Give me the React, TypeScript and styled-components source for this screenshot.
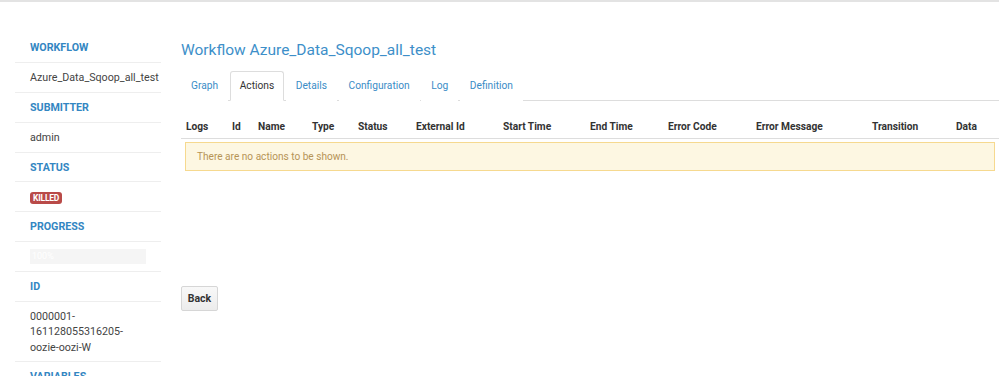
import React from "react";
import styled, { createGlobalStyle } from "styled-components";

const Global = createGlobalStyle`
  html, body { margin: 0; padding: 0; background: #fff; }
  body { font-family: Roboto, "Liberation Sans", Arial, sans-serif; font-size: 10px; color: #333; overflow: hidden; }
  * { box-sizing: border-box; }
`;

const TopBar = styled.div`
  height: 2px;
  background: #e3e3e3;
`;

const Page = styled.div`
  display: flex;
  gap: 20px;
  padding: 31px 0 0 15px;
`;

const Sidebar = styled.ul`
  list-style: none;
  margin: 0;
  padding: 0;
  width: 146px;
  flex: none;
`;

const SideItem = styled.li<{ $head?: boolean }>`
  padding: 7px 15px 6.4px;
  line-height: 15.5px;
  border-bottom: 1px solid #eeeeee;
  font-size: 10.7px;
  color: ${(p) => (p.$head ? "#3386c2" : "#444")};
  font-weight: ${(p) => (p.$head ? 700 : 400)};
  text-transform: ${(p) => (p.$head ? "uppercase" : "none")};
  white-space: nowrap;
`;

const WrapItem = styled(SideItem)`
  white-space: normal;
`;

const Badge = styled.span`
  display: inline-block;
  background: #b94a48;
  color: #fff;
  font-weight: 700;
  font-size: 8.5px;
  line-height: 12px;
  padding: 0 3px;
  border-radius: 3px;
  vertical-align: middle;
  letter-spacing: -0.2px;
`;

const Progress = styled.div`
  height: 15px;
  width: 116px;
  background: #f5f5f5;
  color: #fff;
  font-size: 9px;
  line-height: 15px;
  padding-left: 2px;
`;

const Main = styled.div`
  flex: 1;
  min-width: 818px;
  display: flex;
  flex-direction: column;
`;

const Title = styled.h2`
  margin: 6px 0 10px;
  font-size: 15.5px;
  font-weight: 400;
  line-height: 22px;
  color: #3d8fc9;
`;

const Tabs = styled.ul`
  list-style: none;
  margin: 0;
  padding: 0;
  display: flex;
  border-bottom: 1px solid #dddddd;
  height: 30px;
`;

const Tab = styled.li<{ $active?: boolean }>`
  margin-right: 1.6px;
  padding: 0 9px;
  height: 30px;
  line-height: 28px;
  font-size: 10.2px;
  color: ${(p) => (p.$active ? "#333" : "#3a8cc6")};
  border: 1px solid ${(p) => (p.$active ? "#dddddd" : "transparent")};
  border-bottom-color: ${(p) => (p.$active ? "#fff" : "transparent")};
  border-radius: 3px 3px 0 0;
  background: #fff;
`;

const Table = styled.table`
  width: 818px;
  border-collapse: collapse;
  table-layout: fixed;
  margin-top: 16px;
`;

const Th = styled.th<{ $w: number }>`
  width: ${(p) => p.$w}px;
  text-align: left;
  font-weight: 700;
  font-size: 10.2px;
  color: #333;
  padding: 4px 5px 5px;
  line-height: 12px;
  border-bottom: 1px solid #dddddd;
  white-space: nowrap;
`;

const Td = styled.td`
  padding: 3px 4px 0;
`;

const Alert = styled.div`
  background: #fdf7e2;
  border: 1px solid #f6d98f;
  color: #b69456;
  font-size: 10.1px;
  padding: 7px 11px;
  line-height: 13px;
`;

const Footer = styled.div`
  margin-top: 115px;
`;

const Button = styled.button`
  font-family: Roboto, "Liberation Sans", Arial, sans-serif;
  font-size: 10.5px;
  font-weight: 700;
  color: #333;
  background: linear-gradient(#f8f8f8, #ececec);
  border: 1px solid #d6d6d6;
  border-radius: 2px;
  height: 25px;
  width: 37px;
  padding: 0;
`;

const columns: [string, number][] = [
  ["Logs", 46],
  ["Id", 26],
  ["Name", 54],
  ["Type", 46],
  ["Status", 58],
  ["External Id", 87],
  ["Start Time", 87],
  ["End Time", 78],
  ["Error Code", 88],
  ["Error Message", 116],
  ["Transition", 84],
  ["Data", 48],
];

const tabs = ["Graph", "Actions", "Details", "Configuration", "Log", "Definition"];

export default function App() {
  return (
    <>
      <Global />
      <TopBar />
      <Page>
        <Sidebar>
          <SideItem $head>Workflow</SideItem>
          <SideItem>Azure_Data_Sqoop_all_test</SideItem>
          <SideItem $head>Submitter</SideItem>
          <SideItem>admin</SideItem>
          <SideItem $head>Status</SideItem>
          <SideItem>
            <Badge>KILLED</Badge>
          </SideItem>
          <SideItem $head>Progress</SideItem>
          <SideItem>
            <Progress>100%</Progress>
          </SideItem>
          <SideItem $head>Id</SideItem>
          <WrapItem>0000001-161128055316205-oozie-oozi-W</WrapItem>
          <SideItem $head>Variables</SideItem>
        </Sidebar>
        <Main>
          <Title>Workflow Azure_Data_Sqoop_all_test</Title>
          <Tabs>
            {tabs.map((t) => (
              <Tab key={t} $active={t === "Actions"}>
                {t}
              </Tab>
            ))}
          </Tabs>
          <Table>
            <thead>
              <tr>
                {columns.map(([c, w]) => (
                  <Th key={c} $w={w}>
                    {c}
                  </Th>
                ))}
              </tr>
            </thead>
            <tbody>
              <tr>
                <Td colSpan={12}>
                  <Alert>There are no actions to be shown.</Alert>
                </Td>
              </tr>
            </tbody>
          </Table>
          <Footer>
            <Button>Back</Button>
          </Footer>
        </Main>
      </Page>
    </>
  );
}
